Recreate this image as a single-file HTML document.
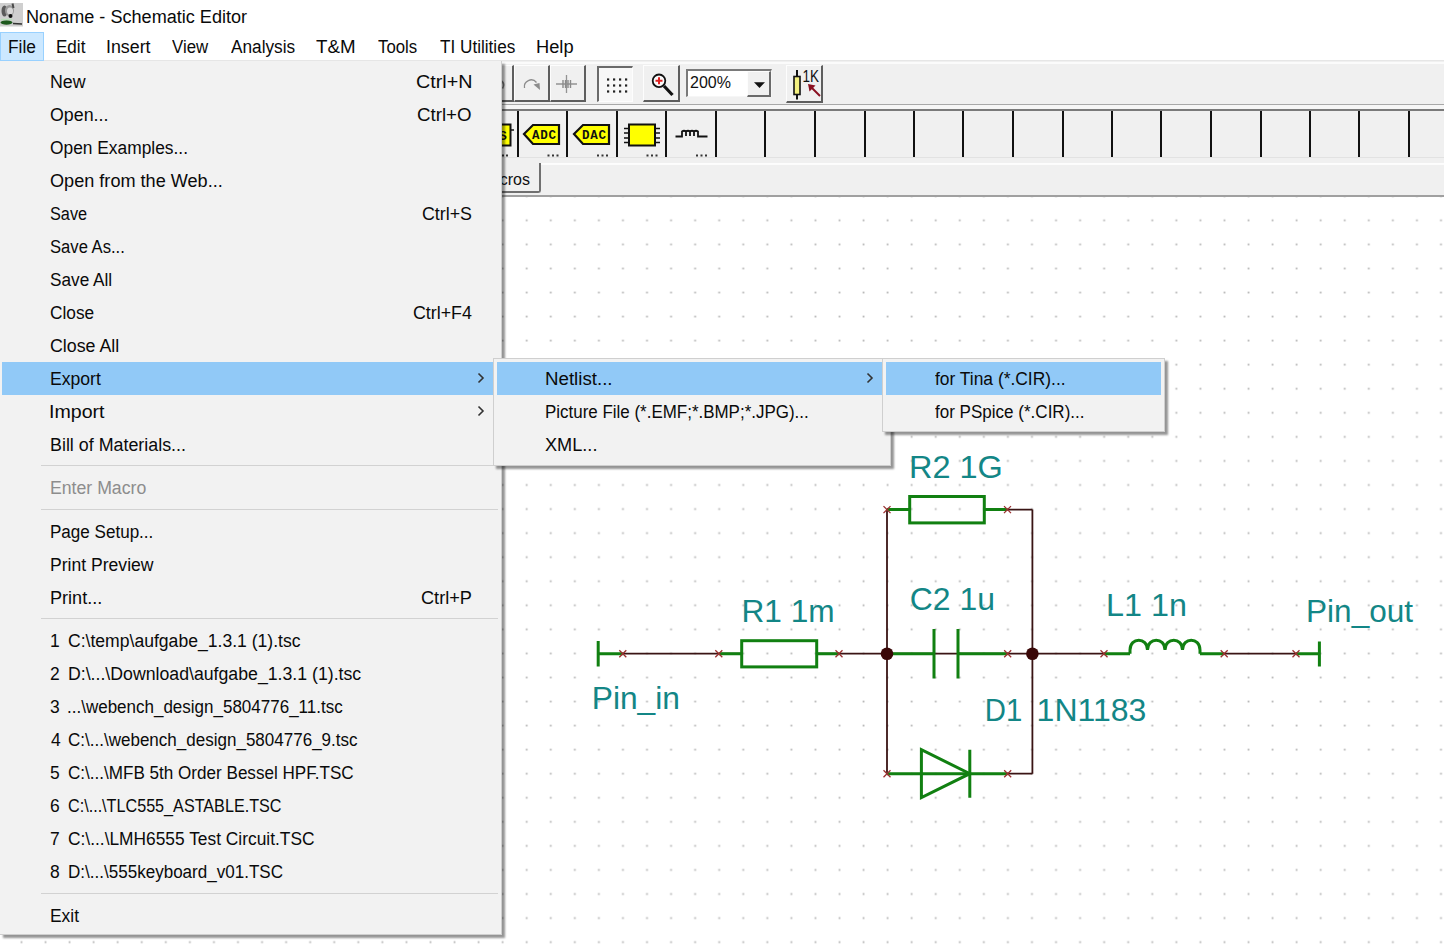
<!DOCTYPE html><html><head><meta charset="utf-8"><style>
*{box-sizing:border-box}
html,body{margin:0;padding:0;width:1444px;height:951px;overflow:hidden;background:#fff;font-family:"Liberation Sans",sans-serif;color:#000}
.abs{position:absolute}
.t{position:absolute;white-space:pre}
.menu{position:absolute;background:#f2f2f2;border:1px solid #cfcfcf;box-shadow:3px 3px 2px rgba(0,0,0,0.42)}
.mi{position:absolute;left:0;height:33px;font-size:17px;line-height:33px;color:#141414;white-space:pre}
.hl{background:#91c9f7}
.sep{position:absolute;height:1px;background:#d2d2d2}
.vl{position:absolute;width:2px;background:#111}
</style></head><body>
<div class="abs" style="left:0;top:195px;width:1444px;height:756px;background:#fff;border-top:2px solid #a0a0a0"></div>
<svg class="abs" style="left:0;top:0" width="1444" height="951"><defs><pattern id="dots" x="-4.1" y="2.3" width="24.06" height="24.06" patternUnits="userSpaceOnUse"><rect x="0.6" y="0.6" width="1.8" height="1.8" fill="#b8b8b8"/></pattern></defs><rect x="0" y="197" width="1444" height="754" fill="url(#dots)"/></svg>
<div class="abs" style="left:0;top:0;width:1444px;height:32px;background:#fff"></div>
<svg class="abs" style="left:0;top:0" width="24" height="28">
<rect x="0" y="3" width="23" height="23.5" fill="#cfcfcf"/>
<ellipse cx="4.5" cy="11" rx="3" ry="5.5" fill="#5a5a5a"/>
<ellipse cx="9.5" cy="10.5" rx="4.5" ry="5.5" fill="#9a9a9a"/>
<ellipse cx="10" cy="11" rx="3" ry="3.5" fill="#d8d8d8"/>
<path d="M12.5 3.5 L13.5 8" stroke="#4a4a4a" stroke-width="2"/>
<circle cx="10.5" cy="16" r="2" fill="#111"/>
<ellipse cx="6.5" cy="22.5" rx="6" ry="2.2" fill="#1f5a1f"/>
<path d="M1 19.5 H12" stroke="#b8dcb8" stroke-width="1.5"/>
<path d="M13 23.5 L22 24" stroke="#333" stroke-width="1.5"/>
</svg>
<div class="t" style="left:26.00px;top:0.60px;font-size:18px;line-height:33px;color:#0a0a0a;transform:scaleX(1.0046);transform-origin:0 0">Noname - Schematic Editor</div>
<div class="abs" style="left:0;top:32px;width:1444px;height:29px;background:#fff;border-bottom:1px solid #e6e6e6"></div>
<div class="abs" style="left:0;top:32px;width:44px;height:29px;background:#cce8ff;border:1px solid #99d1ff"></div>
<div class="t" style="left:7.54px;top:31.10px;font-size:18px;line-height:33px;color:#0a0a0a;transform:scaleX(0.9630);transform-origin:0 0">File</div>
<div class="t" style="left:55.85px;top:31.10px;font-size:18px;line-height:33px;color:#0a0a0a;transform:scaleX(0.9467);transform-origin:0 0">Edit</div>
<div class="t" style="left:105.52px;top:31.10px;font-size:18px;line-height:33px;color:#0a0a0a;transform:scaleX(0.9884);transform-origin:0 0">Insert</div>
<div class="t" style="left:171.60px;top:31.10px;font-size:18px;line-height:33px;color:#0a0a0a;transform:scaleX(0.9333);transform-origin:0 0">View</div>
<div class="t" style="left:230.80px;top:31.10px;font-size:18px;line-height:33px;color:#0a0a0a;transform:scaleX(0.9576);transform-origin:0 0">Analysis</div>
<div class="t" style="left:316.10px;top:31.10px;font-size:18px;line-height:33px;color:#0a0a0a;transform:scaleX(1.0405);transform-origin:0 0">T&amp;M</div>
<div class="t" style="left:378.30px;top:31.10px;font-size:18px;line-height:33px;color:#0a0a0a;transform:scaleX(0.9317);transform-origin:0 0">Tools</div>
<div class="t" style="left:439.60px;top:31.10px;font-size:18px;line-height:33px;color:#0a0a0a;transform:scaleX(0.9526);transform-origin:0 0">TI Utilities</div>
<div class="t" style="left:535.59px;top:31.10px;font-size:18px;line-height:33px;color:#0a0a0a;transform:scaleX(1.0143);transform-origin:0 0">Help</div>
<div class="abs" style="left:0;top:61px;width:1444px;height:134px;background:#f0f0f0"></div>
<div class="abs" style="left:0;top:62px;width:1444px;height:2px;background:#fbfbfb"></div>
<div class="abs" style="left:0;top:104px;width:1444px;height:1px;background:#a8a8a8"></div>
<div class="abs" style="left:0;top:105px;width:1444px;height:4px;background:#f6f6f6"></div>
<div class="abs" style="left:0;top:109px;width:1444px;height:2px;background:#7a7a7a"></div>
<div class="vl" style="left:517px;top:111px;height:46px"></div>
<div class="vl" style="left:566px;top:111px;height:46px"></div>
<div class="vl" style="left:616px;top:111px;height:46px"></div>
<div class="vl" style="left:665px;top:111px;height:46px"></div>
<div class="vl" style="left:715px;top:111px;height:46px"></div>
<div class="vl" style="left:764px;top:111px;height:46px"></div>
<div class="vl" style="left:814px;top:111px;height:46px"></div>
<div class="vl" style="left:864px;top:111px;height:46px"></div>
<div class="vl" style="left:913px;top:111px;height:46px"></div>
<div class="vl" style="left:962px;top:111px;height:46px"></div>
<div class="vl" style="left:1012px;top:111px;height:46px"></div>
<div class="vl" style="left:1062px;top:111px;height:46px"></div>
<div class="vl" style="left:1111px;top:111px;height:46px"></div>
<div class="vl" style="left:1160px;top:111px;height:46px"></div>
<div class="vl" style="left:1210px;top:111px;height:46px"></div>
<div class="vl" style="left:1260px;top:111px;height:46px"></div>
<div class="vl" style="left:1309px;top:111px;height:46px"></div>
<div class="vl" style="left:1358px;top:111px;height:46px"></div>
<div class="vl" style="left:1408px;top:111px;height:46px"></div>
<div class="abs" style="left:0;top:157px;width:1444px;height:1px;background:#e2e2e2"></div>
<div class="abs" style="left:0;top:164px;width:1444px;height:1px;background:#fcfcfc"></div>
<div class="abs" style="left:490px;top:65px;width:24px;height:37px;background:#f0f0f0;border-top:1px solid #fdfdfd;border-left:1px solid #fdfdfd;border-right:2px solid #5e5e5e;border-bottom:2px solid #5e5e5e"></div>
<div class="abs" style="left:514px;top:65px;width:36px;height:37px;background:#f0f0f0;border-top:1px solid #fdfdfd;border-left:1px solid #fdfdfd;border-right:2px solid #5e5e5e;border-bottom:2px solid #5e5e5e"></div>
<div class="abs" style="left:550px;top:65px;width:36px;height:37px;background:#f0f0f0;border-top:1px solid #fdfdfd;border-left:1px solid #fdfdfd;border-right:2px solid #5e5e5e;border-bottom:2px solid #5e5e5e"></div>
<div class="abs" style="left:597px;top:66px;width:36px;height:36px;background:#f7f7f7;border-top:2px solid #6a6a6a;border-left:2px solid #6a6a6a;border-right:1px solid #fdfdfd;border-bottom:1px solid #fdfdfd"></div>
<div class="abs" style="left:643px;top:65px;width:37px;height:37px;background:#f0f0f0;border-top:1px solid #fdfdfd;border-left:1px solid #fdfdfd;border-right:2px solid #5e5e5e;border-bottom:2px solid #5e5e5e"></div>
<div class="abs" style="left:686px;top:69px;width:86px;height:28px;background:#fff;border-top:2px solid #7a7a7a;border-left:2px solid #7a7a7a;border-right:1px solid #f6f6f6;border-bottom:1px solid #f6f6f6"></div>
<div class="abs" style="left:747px;top:71px;width:24px;height:26px;background:#f0f0f0;border-top:1px solid #fdfdfd;border-left:1px solid #fdfdfd;border-right:2px solid #6a6a6a;border-bottom:2px solid #6a6a6a"></div>
<div class="t" style="left:690px;top:73px;font-size:16px;line-height:20px;color:#111">200%</div>
<div class="abs" style="left:786px;top:65px;width:37px;height:38px;background:#f0f0f0;border-top:1px solid #fdfdfd;border-left:1px solid #fdfdfd;border-right:2px solid #5e5e5e;border-bottom:2px solid #5e5e5e"></div>
<svg class="abs" style="left:0;top:0" width="840" height="200">
<path d="M501 80.5 Q505.5 84 502.5 88.5" fill="none" stroke="#7a7a7a" stroke-width="1.6"/>
<path d="M524.5 88 A6.8 6.8 0 0 1 536.5 82.5" fill="none" stroke="#8c8c8c" stroke-width="1.3"/>
<path d="M533.5 84.5 L540 90 L539.5 83 Z" fill="#8c8c8c"/>
<path d="M556 84 H577 M566.5 75 V93" stroke="#939393" stroke-width="1.3"/>
<path d="M563 80 V88 M565.5 80 V88 M568 80 V88 M570.5 80 V88" stroke="#8a8a8a" stroke-width="1.4"/>
<rect x="607" y="78.4" width="2.2" height="2.2" fill="#222"/><rect x="607" y="84.4" width="2.2" height="2.2" fill="#222"/><rect x="607" y="90.4" width="2.2" height="2.2" fill="#222"/><rect x="613" y="78.4" width="2.2" height="2.2" fill="#222"/><rect x="613" y="84.4" width="2.2" height="2.2" fill="#222"/><rect x="613" y="90.4" width="2.2" height="2.2" fill="#222"/><rect x="619" y="78.4" width="2.2" height="2.2" fill="#222"/><rect x="619" y="84.4" width="2.2" height="2.2" fill="#222"/><rect x="619" y="90.4" width="2.2" height="2.2" fill="#222"/><rect x="625" y="78.4" width="2.2" height="2.2" fill="#222"/><rect x="625" y="84.4" width="2.2" height="2.2" fill="#222"/><rect x="625" y="90.4" width="2.2" height="2.2" fill="#222"/>
<circle cx="659" cy="80.8" r="6.3" fill="#fafafa" stroke="#111" stroke-width="1.8"/>
<path d="M659 77.3 V84.3 M655.5 80.8 H662.5" stroke="#e02020" stroke-width="2"/>
<path d="M664 86 L672.5 95" stroke="#111" stroke-width="3.2"/>
<path d="M754 82.2 H765 L759.5 88 Z" fill="#111"/>
<path d="M797 70 V99.5" stroke="#111" stroke-width="2"/>
<rect x="794" y="76.5" width="6" height="18" fill="#f3f080" stroke="#111" stroke-width="1.6"/>
<text x="802.5" y="82" font-family="Liberation Sans" font-size="16" fill="#111" textLength="16.5" lengthAdjust="spacingAndGlyphs">1K</text>
<path d="M820 96 L811 87" stroke="#8a1020" stroke-width="2"/>
<path d="M808 84 L815.5 85.5 L809.5 91.5 Z" fill="#8a1020"/>
</svg>
<svg class="abs" style="left:0;top:0" width="760" height="200">
<rect x="499" y="124.5" width="11.5" height="21" fill="#ffff00" stroke="#111" stroke-width="2"/>
<text x="499" y="140" font-family="Liberation Mono" font-weight="bold" font-size="13" fill="#111">S</text>
<path d="M511 130 H514" stroke="#111" stroke-width="1.5"/>
<path d="M524 134 L533 125 H559 V144 H533 Z" fill="#ffff00" stroke="#111" stroke-width="2.2" stroke-linejoin="miter"/>
<text x="532" y="139" font-family="Liberation Mono" font-weight="bold" font-size="12.5" fill="#111" textLength="24">ADC</text>
<path d="M574 134 L583 125 H609 V144 H583 Z" fill="#ffff00" stroke="#111" stroke-width="2.2"/>
<text x="582" y="139" font-family="Liberation Mono" font-weight="bold" font-size="12.5" fill="#111" textLength="24">DAC</text>
<rect x="629" y="124.5" width="26" height="21" fill="#ffff00" stroke="#111" stroke-width="2"/>
<path d="M624 128.5 H629 M624 133 H629 M624 138 H629 M624 142.5 H629 M655 128.5 H660 M655 133 H660 M655 138 H660 M655 142.5 H660" stroke="#111" stroke-width="1.6"/>
<path d="M675.5 136.5 H682 V131.5 Q684 130 686 131.5 V136 M686 131.5 Q688 130 690 131.5 V136 M690 131.5 Q692 130 694 131.5 V136 M694 131.5 Q696 130 698 131.5 V136.5 H707.5" fill="none" stroke="#111" stroke-width="1.8"/>
<g fill="#333">
<rect x="502" y="154.5" width="2" height="2"/><rect x="506" y="154.5" width="2" height="2"/>
<rect x="547.5" y="154.5" width="2" height="2"/><rect x="552" y="154.5" width="2" height="2"/><rect x="556.5" y="154.5" width="2" height="2"/>
<rect x="597" y="154.5" width="2" height="2"/><rect x="601.5" y="154.5" width="2" height="2"/><rect x="606" y="154.5" width="2" height="2"/>
<rect x="646.5" y="154.5" width="2" height="2"/><rect x="651" y="154.5" width="2" height="2"/><rect x="655.5" y="154.5" width="2" height="2"/>
<rect x="696" y="154.5" width="2" height="2"/><rect x="700.5" y="154.5" width="2" height="2"/><rect x="705" y="154.5" width="2" height="2"/>
</g>
</svg>
<div class="abs" style="left:541px;top:163px;width:903px;height:1px;background:#fdfdfd"></div>
<div class="abs" style="left:450px;top:163px;width:91px;height:30px;background:#f0f0f0;border-right:2px solid #707070;border-bottom:2px solid #707070;border-bottom-right-radius:3px"></div>
<div class="t" style="right:914px;top:170px;font-size:16px;line-height:20px;color:#111">Macros</div>
<svg class="abs" style="left:0;top:0" width="1444" height="951"><path d="M622.8 653.7 H741.7 M816.7 653.7 H1104 M1224.2 653.7 H1296" stroke="#3a1414" stroke-width="1.8" fill="none"/><path d="M887 509.6 V773.7 M1032.4 509.6 V773.7 M1007.5 509.6 H1032.4 M1007.7 773.7 H1032.4" stroke="#3a1414" stroke-width="1.8" fill="none"/><path d="M598.2 641 V666.5 M598.2 653.7 H622.8 M718.8 653.7 H741.7 M816.7 653.7 H839 M887 653.7 H934 M934 629 V678.5 M958 629 V678.5 M958 653.7 H1007.7 M887 509.6 H909.7 M984.3 509.6 H1007.5 M887 773.7 H1007.7 M969.8 749.7 V797.7 M1104 653.7 H1130 M1200 653.7 H1224.2 M1296 653.7 H1319.4 M1319.4 641.5 V666.6" stroke="#118011" stroke-width="3" fill="none"/><rect x="741.7" y="640.7" width="75" height="26.2" fill="none" stroke="#118011" stroke-width="3"/><rect x="909.7" y="496.5" width="74.6" height="26.4" fill="none" stroke="#118011" stroke-width="3"/><path d="M921.4 749.7 V797.7 L969.8 773.7 Z" fill="none" stroke="#118011" stroke-width="3" stroke-linejoin="miter"/><path d="M1130 653.7 V650 C1130 637 1147.5 637 1147.5 650 C1147.5 637 1165 637 1165 650 C1165 637 1182.5 637 1182.5 650 C1182.5 637 1200 637 1200 650 V653.7" fill="none" stroke="#118011" stroke-width="3"/><circle cx="887" cy="653.7" r="6.3" fill="#3a0808"/><circle cx="1032.4" cy="653.7" r="6.3" fill="#3a0808"/><path d="M619.3 650.2 L626.3 657.2 M619.3 657.2 L626.3 650.2" stroke="#9a3030" stroke-width="1.3"/><path d="M715.3 650.2 L722.3 657.2 M715.3 657.2 L722.3 650.2" stroke="#9a3030" stroke-width="1.3"/><path d="M835.5 650.2 L842.5 657.2 M835.5 657.2 L842.5 650.2" stroke="#9a3030" stroke-width="1.3"/><path d="M1004.2 650.2 L1011.2 657.2 M1004.2 657.2 L1011.2 650.2" stroke="#9a3030" stroke-width="1.3"/><path d="M1100.5 650.2 L1107.5 657.2 M1100.5 657.2 L1107.5 650.2" stroke="#9a3030" stroke-width="1.3"/><path d="M1220.7 650.2 L1227.7 657.2 M1220.7 657.2 L1227.7 650.2" stroke="#9a3030" stroke-width="1.3"/><path d="M1292.5 650.2 L1299.5 657.2 M1292.5 657.2 L1299.5 650.2" stroke="#9a3030" stroke-width="1.3"/><path d="M883.5 506.1 L890.5 513.1 M883.5 513.1 L890.5 506.1" stroke="#9a3030" stroke-width="1.3"/><path d="M1004.0 506.1 L1011.0 513.1 M1004.0 513.1 L1011.0 506.1" stroke="#9a3030" stroke-width="1.3"/><path d="M883.5 770.2 L890.5 777.2 M883.5 777.2 L890.5 770.2" stroke="#9a3030" stroke-width="1.3"/><path d="M1004.2 770.2 L1011.2 777.2 M1004.2 777.2 L1011.2 770.2" stroke="#9a3030" stroke-width="1.3"/><text transform="translate(908.95 477.6) scale(1.0161 1)" x="0" y="0" font-family="Liberation Sans" font-size="32" fill="#138686">R2 1G</text><text transform="translate(909.80 609.8) scale(0.9975 1)" x="0" y="0" font-family="Liberation Sans" font-size="32" fill="#138686">C2 1u</text><text transform="translate(741.53 621.6) scale(0.9888 1)" x="0" y="0" font-family="Liberation Sans" font-size="32" fill="#138686">R1 1m</text><text transform="translate(1105.97 615.8) scale(1.0107 1)" x="0" y="0" font-family="Liberation Sans" font-size="32" fill="#138686">L1 1n</text><text transform="translate(1306.04 621.5) scale(0.9868 1)" x="0" y="0" font-family="Liberation Sans" font-size="32" fill="#138686">Pin_out</text><text transform="translate(591.73 709) scale(0.9917 1)" x="0" y="0" font-family="Liberation Sans" font-size="32" fill="#138686">Pin_in</text><text transform="translate(984.75 720.5) scale(0.9167 1)" x="0" y="0" font-family="Liberation Sans" font-size="32" fill="#138686">D1</text><text transform="translate(1036.60 720.5) scale(1.0000 1)" x="0" y="0" font-family="Liberation Sans" font-size="32" fill="#138686">1N1183</text></svg>
<div class="menu" style="left:0;top:61px;width:502px;height:874px;border-top:none;border-left:none"></div>
<div class="t" style="left:49.81px;top:65.50px;font-size:18px;line-height:33px;color:#0a0a0a;transform:scaleX(0.9886);transform-origin:0 0">New</div>
<div class="t" style="left:416.20px;top:65.50px;font-size:18px;line-height:33px;color:#0a0a0a;transform:scaleX(1.0959);transform-origin:0 0">Ctrl+N</div>
<div class="t" style="left:49.81px;top:98.50px;font-size:18px;line-height:33px;color:#0a0a0a;transform:scaleX(0.9893);transform-origin:0 0">Open...</div>
<div class="t" style="left:416.96px;top:98.50px;font-size:18px;line-height:33px;color:#0a0a0a;transform:scaleX(1.0392);transform-origin:0 0">Ctrl+O</div>
<div class="t" style="left:49.84px;top:131.50px;font-size:18px;line-height:33px;color:#0a0a0a;transform:scaleX(0.9643);transform-origin:0 0">Open Examples...</div>
<div class="t" style="left:49.79px;top:164.50px;font-size:18px;line-height:33px;color:#0a0a0a;transform:scaleX(1.0059);transform-origin:0 0">Open from the Web...</div>
<div class="t" style="left:49.89px;top:197.50px;font-size:18px;line-height:33px;color:#0a0a0a;transform:scaleX(0.9051);transform-origin:0 0">Save</div>
<div class="t" style="left:421.51px;top:197.50px;font-size:18px;line-height:33px;color:#0a0a0a;transform:scaleX(0.9898);transform-origin:0 0">Ctrl+S</div>
<div class="t" style="left:49.88px;top:230.50px;font-size:18px;line-height:33px;color:#0a0a0a;transform:scaleX(0.9231);transform-origin:0 0">Save As...</div>
<div class="t" style="left:49.84px;top:263.50px;font-size:18px;line-height:33px;color:#0a0a0a;transform:scaleX(0.9556);transform-origin:0 0">Save All</div>
<div class="t" style="left:49.84px;top:296.50px;font-size:18px;line-height:33px;color:#0a0a0a;transform:scaleX(0.9591);transform-origin:0 0">Close</div>
<div class="t" style="left:412.61px;top:296.50px;font-size:18px;line-height:33px;color:#0a0a0a;transform:scaleX(0.9897);transform-origin:0 0">Ctrl+F4</div>
<div class="t" style="left:49.81px;top:329.50px;font-size:18px;line-height:33px;color:#0a0a0a;transform:scaleX(0.9882);transform-origin:0 0">Close All</div>
<div class="abs hl" style="top:361.7px;left:2px;width:492px;height:33px"></div>
<div class="t" style="left:49.82px;top:362.50px;font-size:18px;line-height:33px;color:#0a0a0a;transform:scaleX(0.9765);transform-origin:0 0">Export</div>
<svg class="abs" style="left:477px;top:372.15999999999997px" width="8" height="12"><path d="M1.5 1.5 L6 6 L1.5 10.5" fill="none" stroke="#333" stroke-width="1.6"/></svg>
<div class="t" style="left:48.62px;top:395.50px;font-size:18px;line-height:33px;color:#0a0a0a;transform:scaleX(1.0878);transform-origin:0 0">Import</div>
<svg class="abs" style="left:477px;top:405.15999999999997px" width="8" height="12"><path d="M1.5 1.5 L6 6 L1.5 10.5" fill="none" stroke="#333" stroke-width="1.6"/></svg>
<div class="t" style="left:49.81px;top:428.50px;font-size:18px;line-height:33px;color:#0a0a0a;transform:scaleX(0.9925);transform-origin:0 0">Bill of Materials...</div>
<div class="sep" style="left:41px;width:457px;top:465.4px"></div>
<div class="t" style="left:49.82px;top:472.00px;font-size:18px;line-height:33px;color:#8d8d8d;transform:scaleX(0.9813);transform-origin:0 0">Enter Macro</div>
<div class="sep" style="left:41px;width:457px;top:508.9px"></div>
<div class="t" style="left:49.85px;top:515.50px;font-size:18px;line-height:33px;color:#0a0a0a;transform:scaleX(0.9472);transform-origin:0 0">Page Setup...</div>
<div class="t" style="left:49.82px;top:548.50px;font-size:18px;line-height:33px;color:#0a0a0a;transform:scaleX(0.9762);transform-origin:0 0">Print Preview</div>
<div class="t" style="left:49.80px;top:581.50px;font-size:18px;line-height:33px;color:#0a0a0a;transform:scaleX(1.0041);transform-origin:0 0">Print...</div>
<div class="t" style="left:420.59px;top:581.50px;font-size:18px;line-height:33px;color:#0a0a0a;transform:scaleX(1.0082);transform-origin:0 0">Ctrl+P</div>
<div class="sep" style="left:41px;width:457px;top:618.4px"></div>
<div class="t" style="left:49.63px;top:625.00px;font-size:18px;line-height:33px;color:#0a0a0a;transform:scaleX(0.9700);transform-origin:0 0">1</div>
<div class="t" style="left:67.82px;top:625.00px;font-size:18px;line-height:33px;color:#0a0a0a;transform:scaleX(0.9764);transform-origin:0 0">C:\temp\aufgabe_1.3.1 (1).tsc</div>
<div class="t" style="left:49.63px;top:658.00px;font-size:18px;line-height:33px;color:#0a0a0a;transform:scaleX(0.9700);transform-origin:0 0">2</div>
<div class="t" style="left:67.82px;top:658.00px;font-size:18px;line-height:33px;color:#0a0a0a;transform:scaleX(0.9832);transform-origin:0 0">D:\...\Download\aufgabe_1.3.1 (1).tsc</div>
<div class="t" style="left:49.63px;top:691.00px;font-size:18px;line-height:33px;color:#0a0a0a;transform:scaleX(0.9700);transform-origin:0 0">3</div>
<div class="t" style="left:66.91px;top:691.00px;font-size:18px;line-height:33px;color:#0a0a0a;transform:scaleX(0.9445);transform-origin:0 0">...\webench_design_5804776_11.tsc</div>
<div class="t" style="left:50.60px;top:724.00px;font-size:18px;line-height:33px;color:#0a0a0a;transform:scaleX(0.9700);transform-origin:0 0">4</div>
<div class="t" style="left:67.85px;top:724.00px;font-size:18px;line-height:33px;color:#0a0a0a;transform:scaleX(0.9456);transform-origin:0 0">C:\...\webench_design_5804776_9.tsc</div>
<div class="t" style="left:49.63px;top:757.00px;font-size:18px;line-height:33px;color:#0a0a0a;transform:scaleX(0.9700);transform-origin:0 0">5</div>
<div class="t" style="left:67.85px;top:757.00px;font-size:18px;line-height:33px;color:#0a0a0a;transform:scaleX(0.9488);transform-origin:0 0">C:\...\MFB 5th Order Bessel HPF.TSC</div>
<div class="t" style="left:49.63px;top:790.00px;font-size:18px;line-height:33px;color:#0a0a0a;transform:scaleX(0.9700);transform-origin:0 0">6</div>
<div class="t" style="left:67.90px;top:790.00px;font-size:18px;line-height:33px;color:#0a0a0a;transform:scaleX(0.8979);transform-origin:0 0">C:\...\TLC555_ASTABLE.TSC</div>
<div class="t" style="left:49.63px;top:823.00px;font-size:18px;line-height:33px;color:#0a0a0a;transform:scaleX(0.9700);transform-origin:0 0">7</div>
<div class="t" style="left:67.84px;top:823.00px;font-size:18px;line-height:33px;color:#0a0a0a;transform:scaleX(0.9638);transform-origin:0 0">C:\...\LMH6555 Test Circuit.TSC</div>
<div class="t" style="left:49.63px;top:856.00px;font-size:18px;line-height:33px;color:#0a0a0a;transform:scaleX(0.9700);transform-origin:0 0">8</div>
<div class="t" style="left:67.85px;top:856.00px;font-size:18px;line-height:33px;color:#0a0a0a;transform:scaleX(0.9467);transform-origin:0 0">D:\...\555keyboard_v01.TSC</div>
<div class="sep" style="left:41px;width:457px;top:892.9px"></div>
<div class="t" style="left:49.83px;top:899.50px;font-size:18px;line-height:33px;color:#0a0a0a;transform:scaleX(0.9655);transform-origin:0 0">Exit</div>
<div class="menu" style="left:493px;top:358px;width:398px;height:108px"></div>
<div class="abs hl" style="left:497px;top:361.7px;width:385px;height:33px"></div>
<div class="t" style="left:545.36px;top:362.50px;font-size:18px;line-height:33px;color:#0a0a0a;transform:scaleX(1.0387);transform-origin:0 0">Netlist...</div>
<div class="t" style="left:545.46px;top:395.50px;font-size:18px;line-height:33px;color:#0a0a0a;transform:scaleX(0.9415);transform-origin:0 0">Picture File (*.EMF;*.BMP;*.JPG)...</div>
<div class="t" style="left:545.39px;top:428.50px;font-size:18px;line-height:33px;color:#0a0a0a;transform:scaleX(1.0082);transform-origin:0 0">XML...</div>
<svg class="abs" style="left:866px;top:372.2px" width="8" height="12"><path d="M1.5 1.5 L6 6 L1.5 10.5" fill="none" stroke="#333" stroke-width="1.6"/></svg>
<div class="menu" style="left:882px;top:358px;width:283px;height:74px"></div>
<div class="abs hl" style="left:886px;top:361.7px;width:275px;height:33px"></div>
<div class="t" style="left:934.90px;top:362.50px;font-size:18px;line-height:33px;color:#0a0a0a;transform:scaleX(0.9669);transform-origin:0 0">for Tina (*.CIR)...</div>
<div class="t" style="left:934.90px;top:395.50px;font-size:18px;line-height:33px;color:#0a0a0a;transform:scaleX(0.9462);transform-origin:0 0">for PSpice (*.CIR)...</div>
</body></html>
